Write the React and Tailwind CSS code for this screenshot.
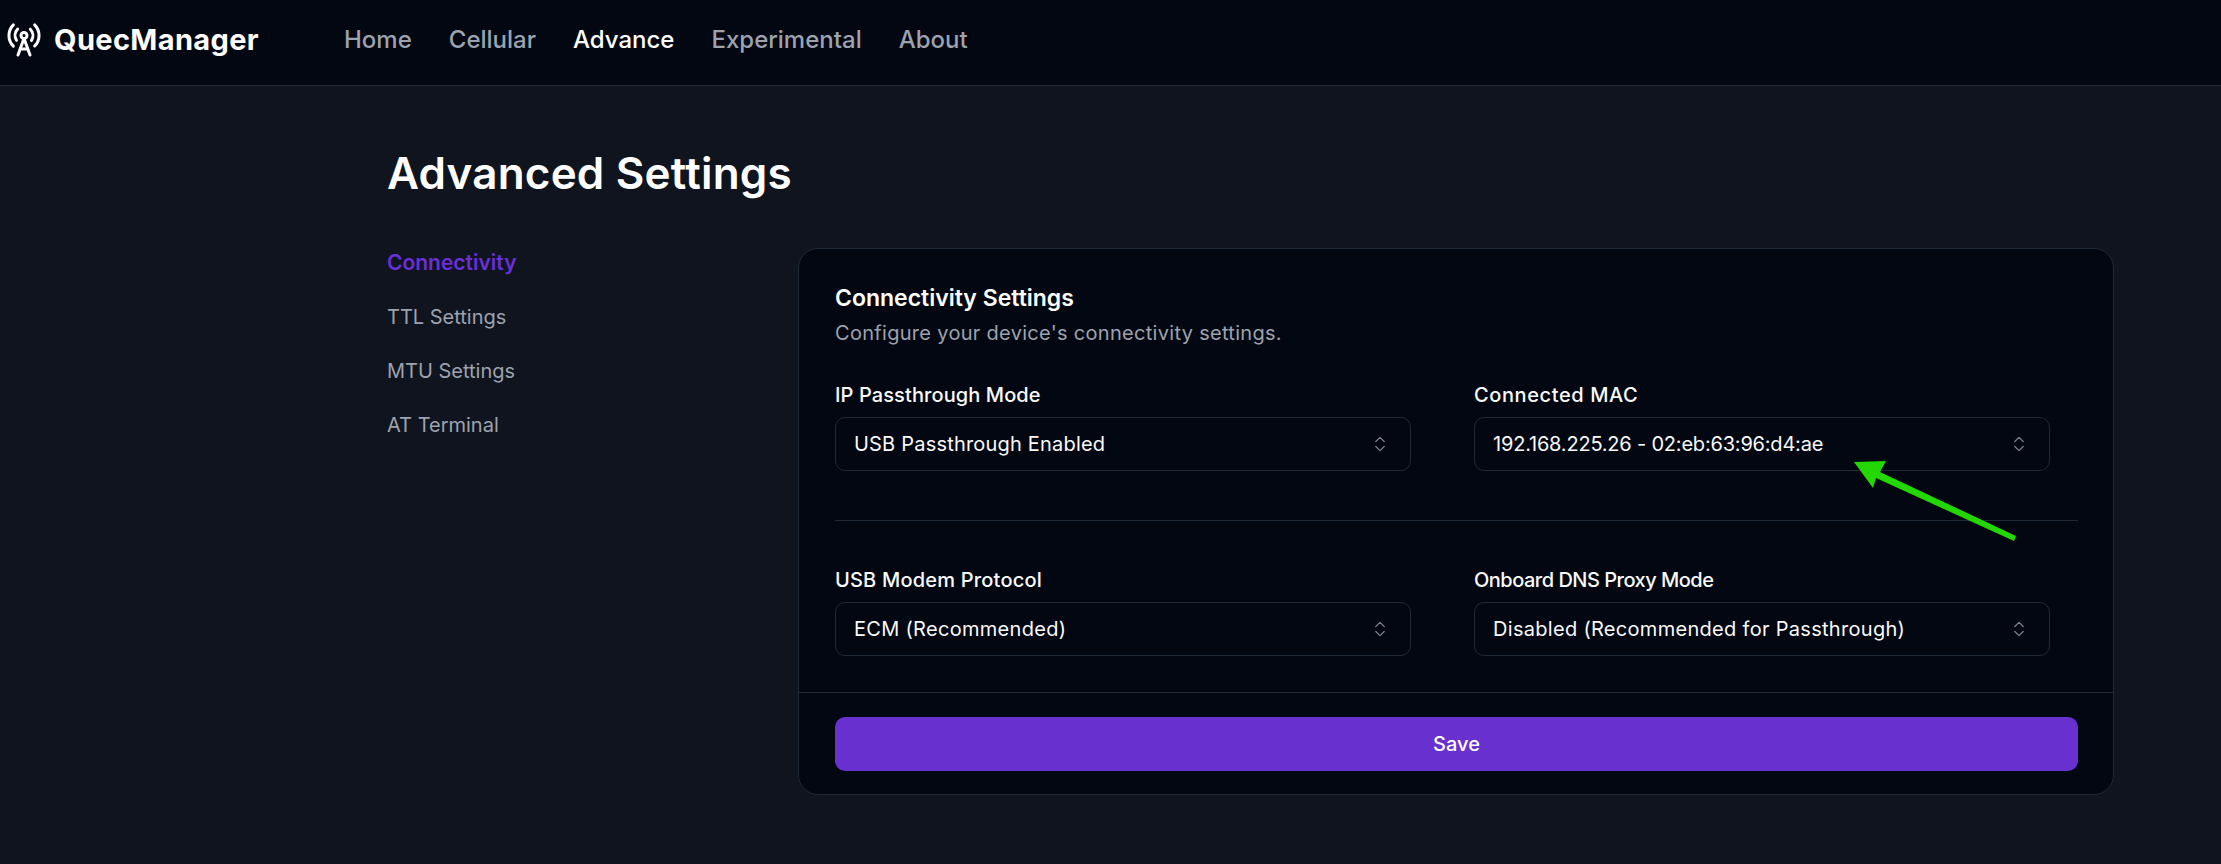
import { ChevronsUpDown, RadioTower } from "lucide-react";

const navItems = ["Home", "Cellular", "Advance", "Experimental", "About"];
const sideItems = ["Connectivity", "TTL Settings", "MTU Settings", "AT Terminal"];

const Field = ({ label, labelClass, value, valueClass }) => (
  <div className="w-[576px]">
    <div className={`text-[20px] leading-[28px] font-medium text-[#f9fafb] mb-[8px] ${labelClass}`}>{label}</div>
    <div className="h-[54px] flex items-center justify-between pl-[18px] pr-[20px] rounded-[10px] border border-[#1f2937] text-[20px] leading-[26px] text-[#f9fafb]">
      <span className={valueClass}>{value}</span>
      <ChevronsUpDown className="w-[20px] h-[20px] opacity-50" strokeWidth={1.5} />
    </div>
  </div>
);

const App = () => {
  return (
    <div className="relative min-h-screen overflow-hidden bg-[#10141f] font-['Inter',sans-serif] text-white">
      {/* Top bar */}
      <header className="h-[86px] flex items-center pb-[6px] pl-[6px] bg-[#030712] border-b border-[#1f2937]">
        <RadioTower className="w-[36px] h-[36px] text-white" strokeWidth={2} />
        <span className="ml-[12px] w-[205px] text-[29px] tracking-[0.35px] font-bold leading-none">QuecManager</span>
        <nav className="ml-[85px] flex gap-[37px] text-[24px] font-medium">
          {navItems.map((item) => (
            <span key={item} className={item === "Advance" ? "text-white" : "text-[#9ca3af]"}>
              {item}
            </span>
          ))}
        </nav>
      </header>

      <main className="pl-[387px] pt-[62px]">
        <h1 className="text-[44px] leading-[50px] font-semibold tracking-[0.2px]">Advanced Settings</h1>

        <div className="mt-[50px] flex">
          {/* Side links */}
          <div className="w-[411px] flex flex-col gap-[26px] pt-[1px] text-[20px] leading-[28px] text-[#9ca3af]">
            {sideItems.map((item, i) => (
              <span key={item} className={i === 0 ? "text-[21px] font-semibold text-[#6a2fd8]" : ""}>
                {item}
              </span>
            ))}
          </div>

          {/* Settings card */}
          <div className="w-[1316px] h-[547px] rounded-[20px] border border-[#1f2937] bg-[#030712]">
            <div className="pl-[36px] pr-[35px] pt-[34px]">
              <h2 className="text-[23px] leading-[30px] font-semibold">Connectivity Settings</h2>
              <p className="mt-[6px] text-[20px] leading-[28px] tracking-[0.3px] text-[#9ca3af]">
                Configure your device's connectivity settings.
              </p>

              <div className="mt-[34px] flex gap-[63px]">
                <Field label="IP Passthrough Mode" labelClass="tracking-[0.1px]" value="USB Passthrough Enabled" valueClass="tracking-[0.2px]" />
                <Field label="Connected MAC" labelClass="tracking-[0.6px]" value="192.168.225.26 - 02:eb:63:96:d4:ae" valueClass="tracking-[-0.2px]" />
              </div>

              <div className="mt-[49px] h-[1px] bg-[#1f2937]"></div>

              <div className="mt-[45px] flex gap-[63px]">
                <Field label="USB Modem Protocol" labelClass="tracking-[0.2px]" value="ECM (Recommended)" valueClass="tracking-[0.3px]" />
                <Field label="Onboard DNS Proxy Mode" labelClass="tracking-[-0.5px]" value="Disabled (Recommended for Passthrough)" valueClass="tracking-[0.3px]" />
              </div>
            </div>

            <div className="mt-[36px] border-t border-[#1f2937] pl-[36px] pr-[35px] pt-[24px]">
              <button className="w-full h-[54px] rounded-[10px] bg-[#6830ce] text-[20px] font-medium text-white">
                Save
              </button>
            </div>
          </div>
        </div>
      </main>

      {/* Green annotation arrow */}
      <svg className="absolute left-[1850px] top-[455px] w-[175px] h-[95px]" viewBox="1850 455 175 95">
        <polygon
          fill="#22d800"
          points="1854,462 1886,461 1880,472 2016,536 2014,541 1876,478 1873,488"
        />
      </svg>
    </div>
  );
};

export default App;
